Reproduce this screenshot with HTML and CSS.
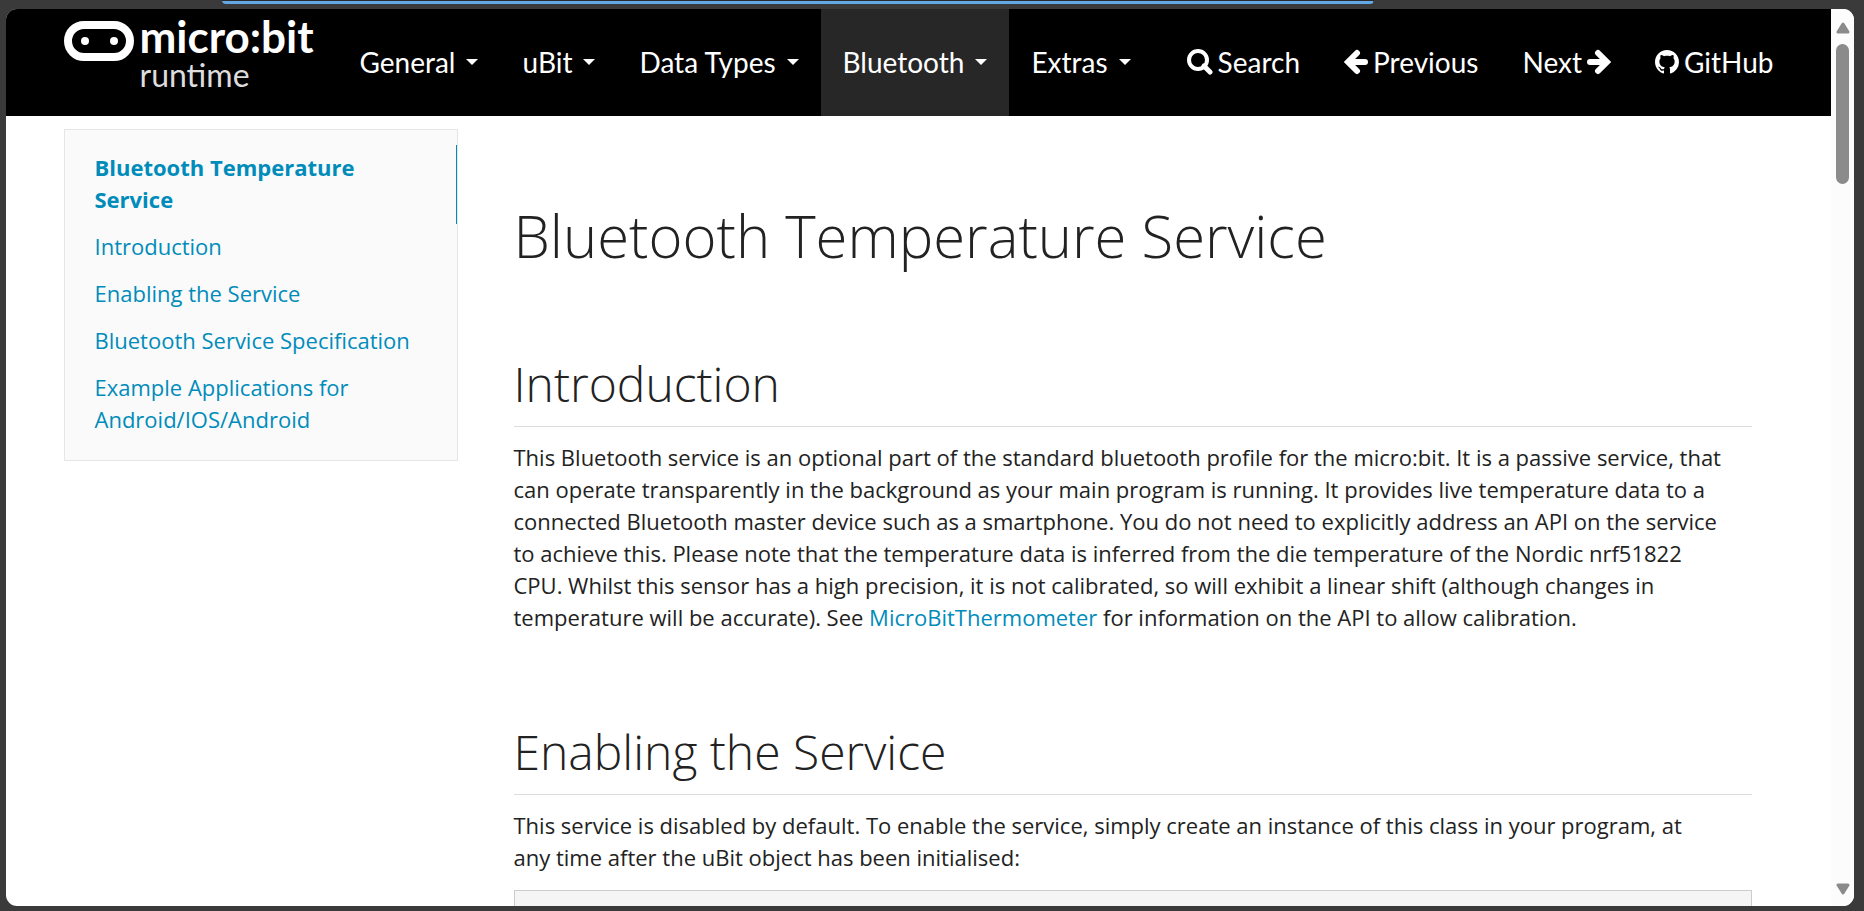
FILE: index.html
```html
<!DOCTYPE html>
<html lang="en">
<head>
    <meta charset="UTF-8">
    <meta name="viewport" content="width=device-width, initial-scale=1.0">
    <title>Bluetooth Temperature Service - micro:bit runtime</title>
    <link rel="stylesheet" href="styles.css">
</head>
<body>
    <div class="address-bar"></div>

    <div class="window">
        <div class="page">
            <header class="navbar">
                <div class="container navbar-inner">
                    <a class="brand" href="#">
                        <svg class="brand-logo" viewBox="0 0 70 42" aria-hidden="true">
                            <rect x="4" y="5" width="62" height="32" rx="16" fill="none" stroke="#fff" stroke-width="8"/>
                            <circle cx="21" cy="21" r="4" fill="#fff"/>
                            <circle cx="50" cy="21" r="4" fill="#fff"/>
                        </svg>
                        <span class="brand-text">
                            <span class="brand-name">micro:bit</span>
                            <span class="brand-sub">runtime</span>
                        </span>
                    </a>

                    <nav class="nav">
                        <button class="nav-item">General <span class="caret"></span></button>
                        <button class="nav-item">uBit <span class="caret"></span></button>
                        <button class="nav-item">Data Types <span class="caret"></span></button>
                        <button class="nav-item active">Bluetooth <span class="caret"></span></button>
                        <button class="nav-item">Extras <span class="caret"></span></button>
                    </nav>

                    <nav class="nav nav-right">
                        <a class="nav-item" href="#">
                            <svg class="icon" viewBox="0 0 26 26" aria-hidden="true">
                                <circle cx="11" cy="11" r="9" fill="none" stroke="#fff" stroke-width="4"/>
                                <path d="M17 17l6 6" stroke="#fff" stroke-width="5" stroke-linecap="round"/>
                            </svg>
                            Search
                        </a>
                        <a class="nav-item" href="#">
                            <svg class="icon icon-small" viewBox="0 0 24 26" aria-hidden="true">
                                <path d="M13 4L4 13l9 9M5 13h16" fill="none" stroke="#fff" stroke-width="6" stroke-linecap="round"/>
                            </svg>
                            Previous
                        </a>
                        <a class="nav-item" href="#">
                            Next
                            <svg class="icon icon-small" viewBox="0 0 24 26" aria-hidden="true">
                                <path d="M11 4l9 9-9 9M19 13H3" fill="none" stroke="#fff" stroke-width="6" stroke-linecap="round"/>
                            </svg>
                        </a>
                        <a class="nav-item" href="#">
                            <svg class="icon icon-small" viewBox="0 0 16 16" aria-hidden="true">
                                <path fill="#fff" d="M8 0C3.58 0 0 3.58 0 8c0 3.54 2.29 6.53 5.47 7.59.4.07.55-.17.55-.38 0-.19-.01-.82-.01-1.49-2.01.37-2.53-.49-2.69-.94-.09-.23-.48-.94-.82-1.13-.28-.15-.68-.52-.01-.53.63-.01 1.08.58 1.23.82.72 1.21 1.87.87 2.33.66.07-.52.28-.87.51-1.07-1.78-.2-3.64-.89-3.64-3.95 0-.87.31-1.59.82-2.15-.08-.2-.36-1.02.08-2.12 0 0 .67-.21 2.2.82.64-.18 1.32-.27 2-.27s1.36.09 2 .27c1.53-1.04 2.2-.82 2.2-.82.44 1.1.16 1.92.08 2.12.51.56.82 1.27.82 2.15 0 3.07-1.87 3.75-3.65 3.95.29.25.54.73.54 1.48 0 1.07-.01 1.93-.01 2.2 0 .21.15.46.55.38A8.01 8.01 0 0 0 16 8c0-4.42-3.58-8-8-8z"/>
                            </svg>
                            GitHub
                        </a>
                    </nav>
                </div>
            </header>

            <div class="container content">
                <aside class="toc">
                    <a class="active" href="#top">Bluetooth Temperature Service</a>
                    <a href="#introduction">Introduction</a>
                    <a href="#enabling">Enabling the Service</a>
                    <a href="#specification">Bluetooth Service Specification</a>
                    <a href="#examples">Example Applications for Android/IOS/Android</a>
                </aside>

                <main class="doc">
                    <h1 id="top">Bluetooth Temperature Service</h1>

                    <h2 id="introduction">Introduction</h2>
                    <p>This Bluetooth service is an optional part of the standard bluetooth profile for the micro:bit. It is a passive service, that can operate transparently in the background as your main program is running. It provides live temperature data to a connected Bluetooth master device such as a smartphone. You do not need to explicitly address an API on the service to achieve this. Please note that the temperature data is inferred from the die temperature of the Nordic nrf51822 CPU. Whilst this sensor has a high precision, it is not calibrated, so will exhibit a linear shift (although changes in temperature will be accurate). See <a href="#">MicroBitThermometer</a> for information on the API to allow calibration.</p>

                    <h2 id="enabling">Enabling the Service</h2>
                    <p>This service is disabled by default. To enable the service, simply create an instance of this class in your program, at any time after the uBit object has been initialised:</p>
                    <pre></pre>
                </main>
            </div>
        </div>

        <div class="scrollbar">
            <svg class="scroll-arrow" viewBox="0 0 14 12" aria-hidden="true">
                <path d="M7 2L2 10h10z" fill="#8b8b8b" stroke="#8b8b8b" stroke-width="3" stroke-linejoin="round"/>
            </svg>
            <div class="scroll-thumb"></div>
            <svg class="scroll-arrow" viewBox="0 0 14 12" aria-hidden="true">
                <path d="M7 10L2 2h10z" fill="#8b8b8b" stroke="#8b8b8b" stroke-width="3" stroke-linejoin="round"/>
            </svg>
        </div>
    </div>
</body>
</html>
```
FILE: styles.css
```css
* {
    box-sizing: border-box;
}

body {
    margin: 0;
    height: 100vh;
    padding: 0 10px 5px 6px;
    display: flex;
    flex-direction: column;
    overflow: hidden;
    background: #3a3a3a;
    color: #222;
    font-family: 'Open Sans', sans-serif;
    font-size: 22px;
    line-height: 32px;
}

a {
    color: #008cba;
    text-decoration: none;
}

.address-bar {
    flex: none;
    height: 4px;
    margin: 0 26% 5px 216px;
    background: #63a9e5;
    border-top: 1px solid #2b2b2b;
    border-radius: 0 0 12px 12px;
}

.window {
    flex: 1;
    min-height: 0;
    display: flex;
    overflow: hidden;
    background: #fff;
    border-radius: 11px;
}

.page {
    flex: 1;
    min-width: 0;
}

.container {
    max-width: 1754px;
    margin: 0 auto;
    padding: 0 22px;
}

.navbar {
    background: #000;
}

.navbar-inner {
    display: flex;
    height: 107px;
    padding-right: 0;
}

.brand {
    display: flex;
    gap: 6px;
    width: 274px;
    color: #fff;
    font-family: Lato, sans-serif;
}

.brand-logo {
    width: 70px;
    height: 42px;
    margin-top: 11px;
}

.brand-text {
    display: flex;
    flex-direction: column;
}

.brand-name {
    font-size: 44px;
    font-weight: 700;
    line-height: 54px;
}

.brand-sub {
    color: #ddd;
    font-size: 32px;
    line-height: 24px;
}

.nav {
    display: flex;
}

.nav-right {
    margin-left: auto;
}

.nav-item {
    display: flex;
    align-items: center;
    padding: 0 22px 2px;
    border: 0;
    background: none;
    color: #fff;
    font-family: Lato, sans-serif;
    font-size: 28px;
    cursor: pointer;
}

.nav-item.active {
    background: #272727;
}

.nav-right .nav-item {
    gap: 5px;
}

.caret {
    margin-left: 11px;
    border-top: 6px solid #fff;
    border-left: 6px solid transparent;
    border-right: 6px solid transparent;
}

.icon {
    width: 26px;
    height: 26px;
}

.icon-small {
    width: 24px;
}

.content {
    display: grid;
    grid-template-columns: 394px 1fr;
    align-items: start;
    gap: 56px;
    padding-right: 44px;
}

.toc {
    margin-top: 13px;
    padding: 15px 0 16px;
    background: #fafafa;
    border: 1px solid #e6e6e6;
}

.toc a {
    display: block;
    padding: 6px 30px 9px;
}

.toc a.active {
    border-right: 1px solid #008cba;
    font-weight: 700;
}

.doc h1,
.doc h2 {
    font-weight: 300;
}

.doc h1 {
    margin: 91px 0 0;
    font-size: 58px;
    line-height: 58px;
}

.doc h2 {
    margin: 86px 0 14px;
    padding-bottom: 9px;
    border-bottom: 1px solid #ddd;
    font-size: 48px;
    line-height: 66px;
}

.doc p {
    margin: 0 0 17px;
    padding-right: 28px;
}

.doc pre {
    height: 80px;
    margin: 0;
    background: #f5f5f5;
    border: 1px solid #ccc;
}

.scrollbar {
    flex: none;
    width: 23px;
    display: flex;
    flex-direction: column;
    align-items: center;
    padding: 13px 0 11px;
    background: #fcfcfc;
}

.scroll-arrow {
    width: 14px;
    height: 12px;
}

.scroll-arrow:last-child {
    margin-top: auto;
}

.scroll-thumb {
    width: 13px;
    height: 16%;
    margin-top: 10px;
    background: #8b8b8b;
    border-radius: 7px;
}
```
